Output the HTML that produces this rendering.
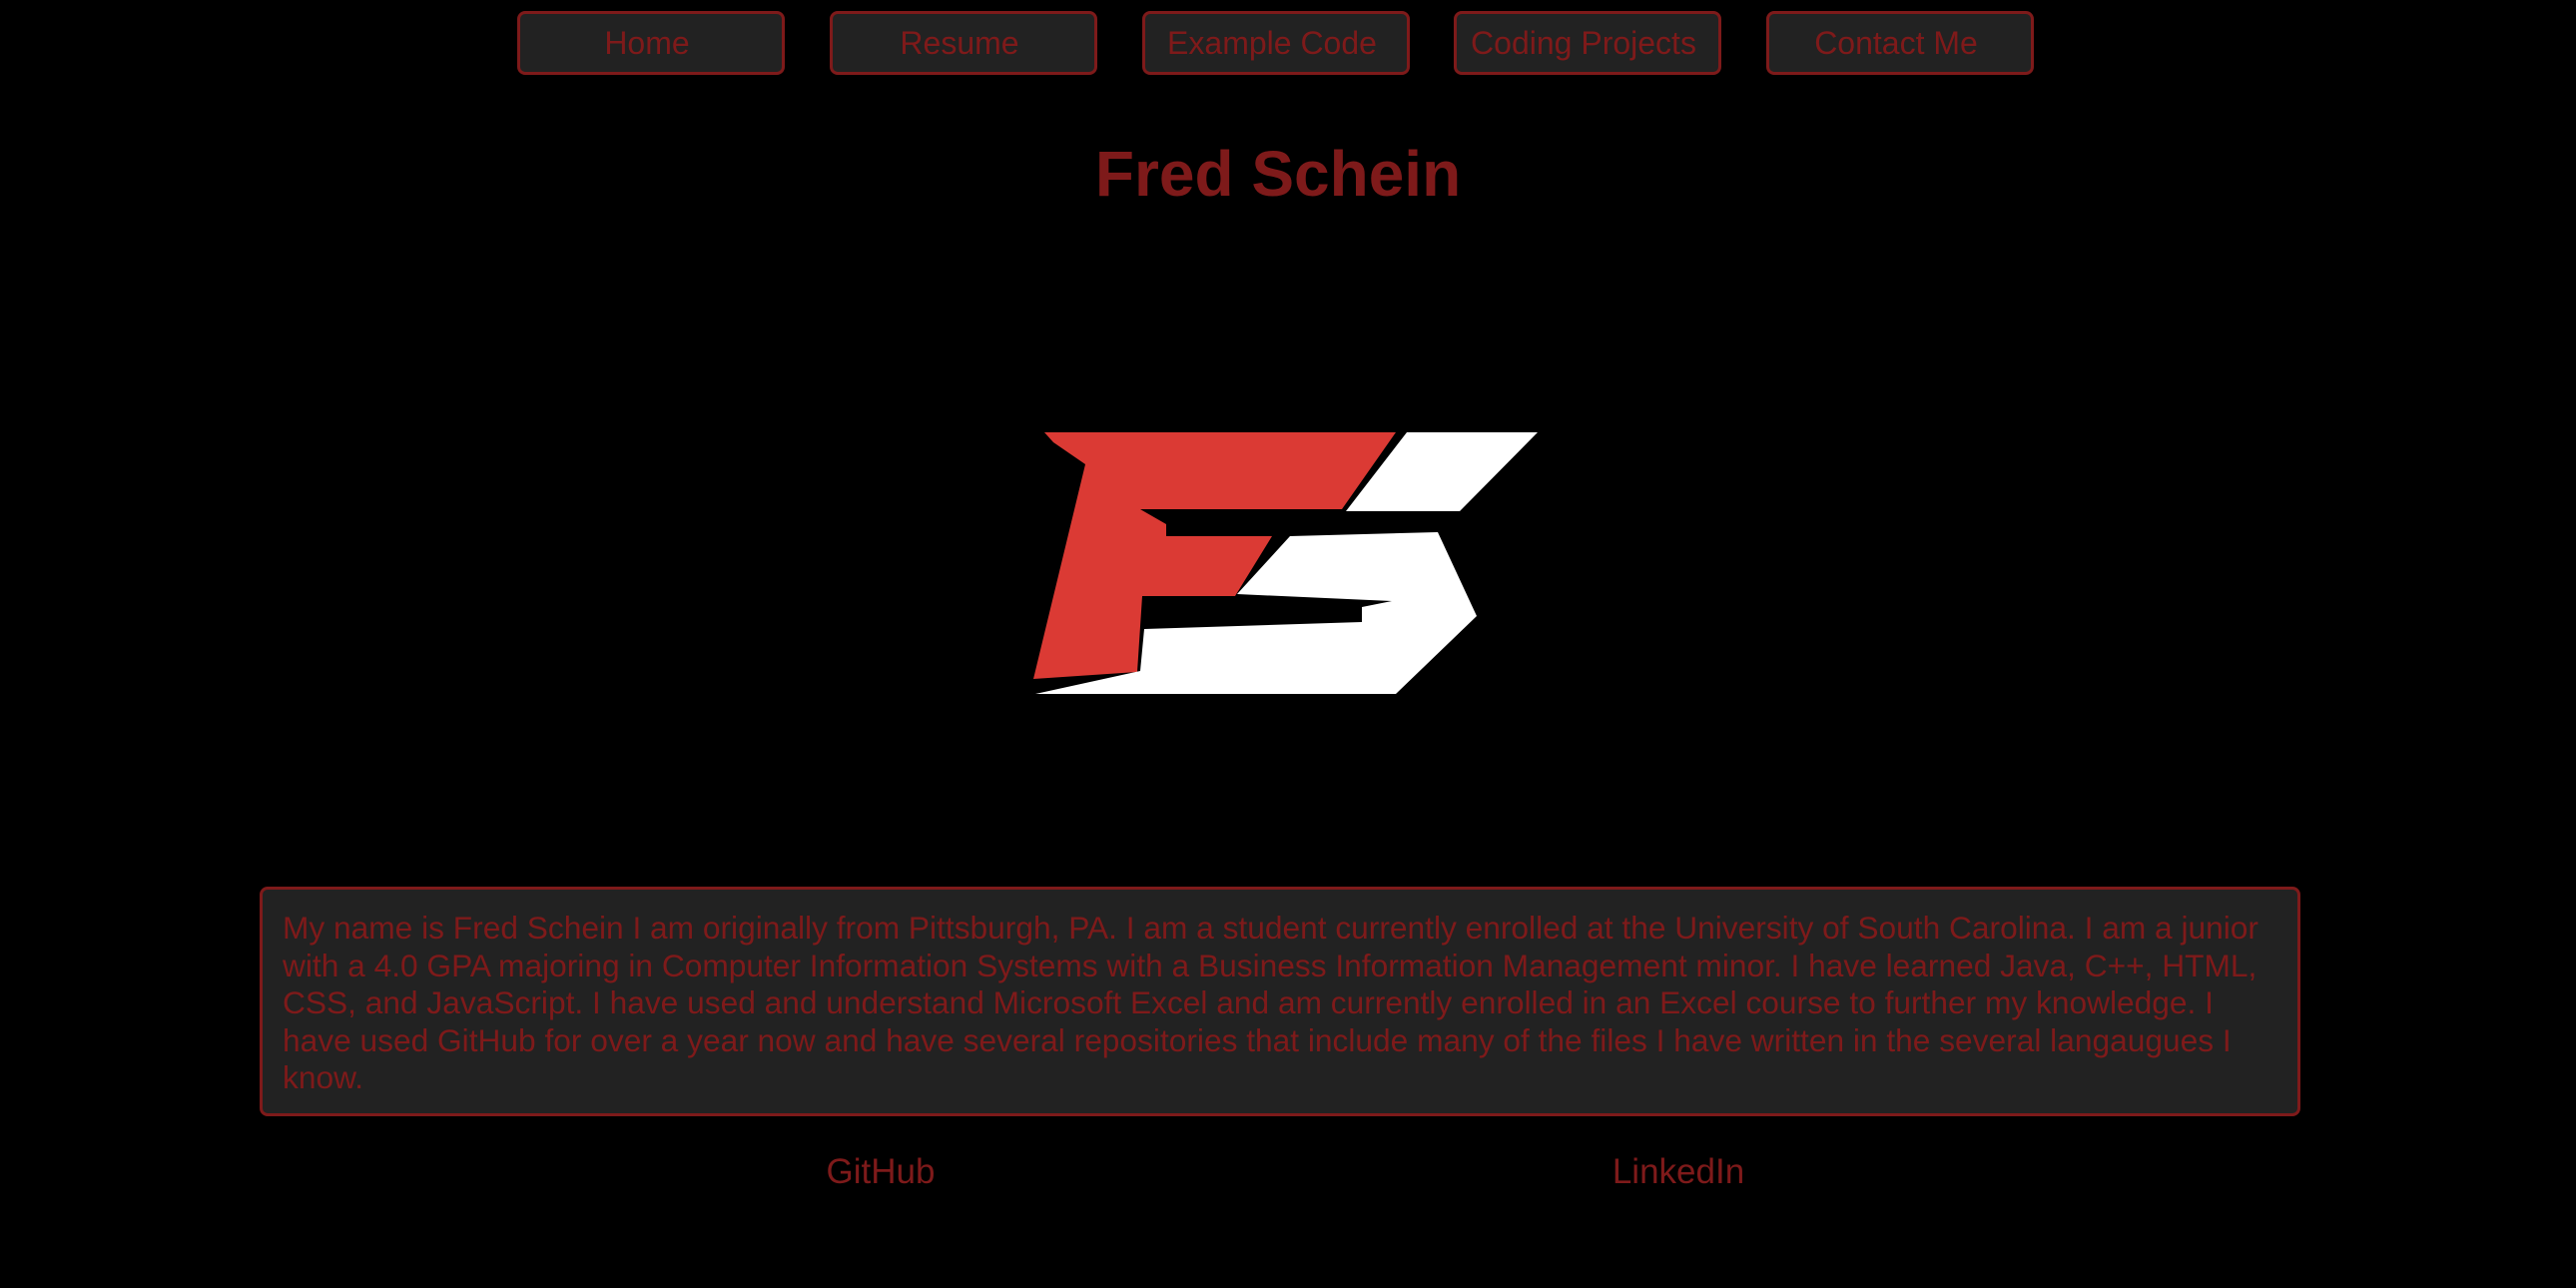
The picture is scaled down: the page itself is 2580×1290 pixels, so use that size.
<!DOCTYPE html>
<html><head><meta charset="utf-8"><style>
html,body{margin:0;padding:0;background:#000;width:2580px;height:1290px;overflow:hidden;font-family:"Liberation Sans",Arial,sans-serif;color:#7e1a1a}
.nav{position:absolute;top:11px;height:58px;width:254px;background:#222;border:3px solid #7e1a1a;border-radius:8px;font-size:32px;display:flex;align-items:center;justify-content:center;padding-right:8px;box-sizing:content-box}
h1{position:absolute;top:134px;left:0;width:2560px;margin:0;text-align:center;font-size:64px;font-weight:bold;line-height:80px}
.para{position:absolute;left:260px;top:888px;width:1998px;height:184px;background:#222;border:3px solid #7e1a1a;border-radius:8px;padding:20px 20px;font-size:31.7px;line-height:37.5px}
.lnk{position:absolute;top:1154px;font-size:35px;transform:translateX(-50%)}
</style></head><body>
<div class="nav" style="left:518px">Home</div>
<div class="nav" style="left:831px">Resume</div>
<div class="nav" style="left:1144px">Example Code</div>
<div class="nav" style="left:1456px">Coding Projects</div>
<div class="nav" style="left:1769px">Contact Me</div>
<h1>Fred Schein</h1>
<svg style="position:absolute;left:0;top:0" width="2580" height="1290">
<polygon fill="#db3a34" points="1046,433 1398,433 1344,510 1142,510 1168,525 1168,537 1274,537 1237,597 1144,597 1139,673 1035,680 1087,465 1055,443"/>
<polygon fill="#fff" points="1409,433 1540,433 1462,512 1348,512"/>
<polygon fill="#fff" points="1440,533 1479,617 1398,695 1037,695 1142,672 1146,630 1364,623 1364,608 1394,602 1239,595 1292,537"/>
</svg>
<div class="para">My name is Fred Schein I am originally from Pittsburgh, PA. I am a student currently enrolled at the University of South Carolina. I am a junior with a 4.0 GPA majoring in Computer Information Systems with a Business Information Management minor. I have learned Java, C++, HTML, CSS, and JavaScript. I have used and understand Microsoft Excel and am currently enrolled in an Excel course to further my knowledge. I have used GitHub for over a year now and have several repositories that include many of the files I have written in the several langaugues I know.</div>
<div class="lnk" style="left:882px">GitHub</div>
<div class="lnk" style="left:1681px">LinkedIn</div>
</body></html>
